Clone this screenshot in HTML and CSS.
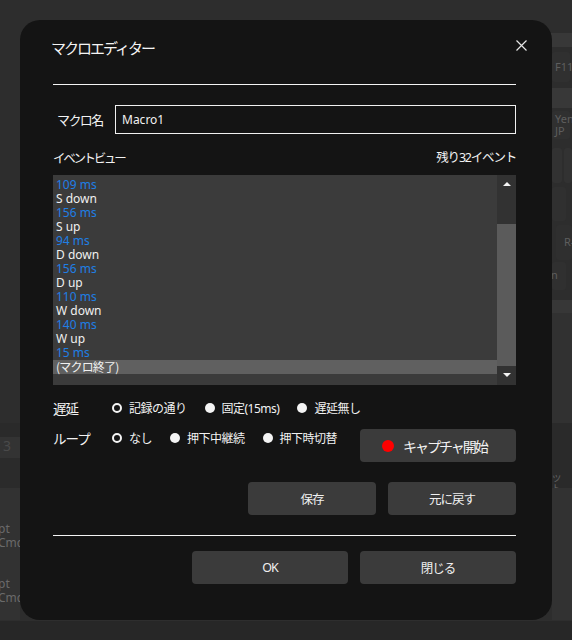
FILE: index.html
```html
<!DOCTYPE html>
<html lang="ja">
<head>
<meta charset="utf-8">
<title>マクロエディター</title>
<link rel="stylesheet" href="styles.css">
</head>
<body>
<div class="backdrop">
  <div class="bd bd-r-band1"></div>
  <div class="bd bd-r-key1"><span>F11</span></div>
  <div class="bd bd-r-band2"></div>
  <div class="bd bd-r-key2"><span>Yen<br>JP</span></div>
  <div class="bd bd-r-key3"></div>
  <div class="bd bd-r-key3b"></div>
  <div class="bd bd-r-key4"></div>
  <div class="bd bd-r-key5"><span>R-</span></div>
  <div class="bd bd-r-key6"><span>n</span></div>
  <div class="bd bd-r-mid"></div>
  <div class="bd bd-r-dark"><span>ット</span></div>
  <div class="bd bd-r-low"></div>
  <div class="bd bd-l-band1"></div>
  <div class="bd bd-l-band2"><span>3</span></div>
  <div class="bd bd-l-band3"></div>
  <div class="bd bd-l-low"><span class="t1">pt<br>Cmd</span><span class="t2">pt<br>Cmd</span></div>
  <div class="bd bd-bottom"></div>
</div>

<div class="dialog">
  <div class="close" aria-label="閉じる">
    <svg width="11" height="11" viewBox="0 0 11 11"><path d="M0.5 0.5 L10.5 10.5 M10.5 0.5 L0.5 10.5" stroke="#e6e6e6" stroke-width="1.2" fill="none"/></svg>
  </div>
  <h1 class="title">マクロエディター</h1>
  <div class="rule"></div>

  <div class="name-row">
    <span class="name-label">マクロ名</span>
    <div class="name-input">Macro1</div>
  </div>

  <div class="view-head">
    <span class="view-title">イベントビュー</span>
    <span class="view-count">残り32イベント</span>
  </div>

  <div class="list">
    <div class="rows">
      <div class="row ms">109 ms</div>
      <div class="row">S down</div>
      <div class="row ms">156 ms</div>
      <div class="row">S up</div>
      <div class="row ms">94 ms</div>
      <div class="row">D down</div>
      <div class="row ms">156 ms</div>
      <div class="row">D up</div>
      <div class="row ms">110 ms</div>
      <div class="row">W down</div>
      <div class="row ms">140 ms</div>
      <div class="row">W up</div>
      <div class="row ms">15 ms</div>
      <div class="row sel">(マクロ終了)</div>
    </div>
    <div class="scrollbar">
      <div class="sb-btn"><span class="arrow-up"></span></div>
      <div class="sb-gap"></div>
      <div class="sb-thumb"></div>
      <div class="sb-btn"><span class="arrow-down"></span></div>
    </div>
  </div>

  <div class="opt-row delay">
    <span class="opt-label">遅延</span>
    <span class="radio"><span class="dot on"></span>記録の通り</span>
    <span class="radio"><span class="dot"></span>固定(15ms)</span>
    <span class="radio"><span class="dot"></span>遅延無し</span>
  </div>

  <div class="loop-row">
    <div class="opt-row loop">
      <span class="opt-label">ループ</span>
      <span class="radio"><span class="dot on"></span>なし</span>
      <span class="radio"><span class="dot"></span>押下中継続</span>
      <span class="radio"><span class="dot"></span>押下時切替</span>
    </div>
    <div class="capture"><span class="rec"></span><span class="capture-text">キャプチャ開始</span></div>
  </div>

  <div class="btn-row first">
    <div class="btn small">保存</div>
    <div class="btn small">元に戻す</div>
  </div>

  <div class="rule rule2"></div>

  <div class="btn-row last">
    <div class="btn large">OK</div>
    <div class="btn large">閉じる</div>
  </div>
</div>
</body>
</html>
```

FILE: styles.css
```css
html, body {
  margin: 0;
}
body {
  width: 572px;
  height: 640px;
  box-sizing: border-box;
  padding: 20px 0 0 20px;
  background: #2d2d2d;
  font-family: "Noto Sans", "Noto Sans CJK JP", sans-serif;
  color: #f2f2f2;
  overflow: hidden;
  position: relative;
}

/* dimmed application behind the modal */
.backdrop {
  position: absolute;
  inset: 0;
  z-index: 0;
}
.bd {
  position: absolute;
  color: #5e5e5e;
  font-size: 11px;
  line-height: 12px;
}
.bd span { position: absolute; left: 4px; }
.bd-r-band1 { left: 540px; top: 33px; width: 32px; height: 14px; background: #383838; }
.bd-r-key1 { left: 552px; top: 52px; width: 18px; height: 30px; background: #303030; border-radius: 3px; }
.bd-r-key1 span { top: 9px; left: 3px; }
.bd-r-band2 { left: 552px; top: 88px; width: 20px; height: 20px; background: #383838; }
.bd-r-key2 { left: 552px; top: 111px; width: 18px; height: 28px; background: #303030; border-radius: 3px; }
.bd-r-key2 span { top: 2px; left: 3px; }
.bd-r-key3 { left: 552px; top: 148px; width: 10px; height: 35px; background: #323232; border-radius: 3px; }
.bd-r-key3b { left: 564px; top: 148px; width: 8px; height: 35px; background: #323232; border-radius: 3px; }
.bd-r-key4 { left: 552px; top: 187px; width: 14px; height: 34px; background: #303030; border-radius: 3px; }
.bd-r-key5 { left: 556px; top: 225px; width: 16px; height: 35px; background: #2f2f2f; border-radius: 3px; }
.bd-r-key5 span { top: 11px; left: 8px; }
.bd-r-key6 { left: 552px; top: 262px; width: 14px; height: 28px; background: #303030; border-radius: 3px; }
.bd-r-key6 span { top: 7px; left: -1px; }
.bd-r-mid { left: 552px; top: 300px; width: 20px; height: 123px; background: #313131; border-top: 13px solid #373737; box-sizing: border-box; }
.bd-r-dark { left: 552px; top: 423px; width: 20px; height: 65px; background: #2a2a2a; }
.bd-r-dark span { top: 48px; left: -1px; }
.bd-r-low { left: 552px; top: 488px; width: 20px; height: 132px; background: #323232; }
.bd-l-band1 { left: 0; top: 423px; width: 20px; height: 14px; background: #2a2a2a; }
.bd-l-band2 { left: 0; top: 437px; width: 20px; height: 21px; background: #333333; font-size: 14px; }
.bd-l-band2 span { top: 3px; left: 3px; color: #4a4a4a; }
.bd-l-band3 { left: 0; top: 458px; width: 20px; height: 30px; background: #2b2b2b; }
.bd-l-low { left: 0; top: 488px; width: 20px; height: 132px; background: #323232; overflow: hidden; }
.bd-l-low span { left: -2px; color: #6a6a6a; font-size: 12px; line-height: 14px; }
.bd-l-low .t1 { top: 34px; }
.bd-l-low .t2 { top: 89px; }
.bd-bottom { left: 0; top: 620px; width: 572px; height: 20px; background: #272727; border-top: 1px solid #2e2e2e; box-sizing: border-box; }

/* dialog */
.dialog {
  position: relative;
  z-index: 1;
  width: 532px;
  height: 600px;
  box-sizing: border-box;
  padding: 18px 36px 0 33px;
  background: #141414;
  border-radius: 20px;
}
.close {
  position: absolute;
  top: 20px;
  right: 25px;
  width: 11px;
  height: 11px;
  line-height: 0;
}
.title {
  margin: 0 0 0 -2px;
  font-family: "Noto Sans CJK JP", sans-serif;
  font-size: 15px;
  line-height: 20px;
  font-weight: 400;
  letter-spacing: -2px;
  color: #f4f4f4;
}
.rule {
  height: 1px;
  background: #f4f4f4;
  margin-top: 26px;
}

.name-row {
  display: flex;
  align-items: center;
  margin-top: 20px;
  height: 29px;
}
.name-label {
  width: 62px;
  box-sizing: border-box;
  padding-left: 4px;
  font-family: "Noto Sans CJK JP", sans-serif;
  font-size: 13px;
  letter-spacing: -1.6px;
}
.name-input {
  flex: 1;
  height: 29px;
  box-sizing: border-box;
  border: 1px solid #f0f0f0;
  padding-left: 6px;
  font-size: 12px;
  display: flex;
  align-items: center;
}

.view-head {
  display: flex;
  justify-content: space-between;
  margin-top: 15px;
  line-height: 18px;
  font-size: 12.5px;
}
.view-title { letter-spacing: -2.3px; font-family: "Noto Sans CJK JP", sans-serif; }
.view-count { letter-spacing: -1.2px; }

.list {
  display: flex;
  margin-top: 8px;
  height: 210px;
  background: #3b3b3b;
}
.rows {
  flex: 1;
  padding-top: 3px;
  font-size: 12px;
  line-height: 14px;
}
.row {
  height: 14px;
  padding-left: 3px;
  color: #f0f0f0;
}
.row.ms { color: #1f7fe6; }
.row.sel { background: #606060; font-family: "Noto Sans CJK JP", sans-serif; letter-spacing: -0.8px; }
.scrollbar {
  width: 19px;
  display: flex;
  flex-direction: column;
  background: #323232;
}
.sb-btn {
  height: 19px;
  display: flex;
  align-items: center;
  justify-content: center;
}
.sb-gap { height: 30px; }
.sb-thumb { height: 142px; background: #5b5b5b; }
.arrow-up, .arrow-down {
  width: 0;
  height: 0;
  border-left: 4px solid transparent;
  border-right: 4px solid transparent;
}
.arrow-up { border-bottom: 4px solid #f4f4f4; margin-top: -2px; }
.arrow-down { border-top: 4px solid #f4f4f4; margin-top: -2px; }

.opt-row {
  display: flex;
  align-items: center;
  height: 20px;
  font-size: 12px;
  font-family: "Noto Sans", "Noto Sans CJK JP", sans-serif;
}
.opt-row.delay { margin-top: 13px; }
.opt-label {
  width: 59px;
  font-family: "Noto Sans CJK JP", sans-serif;
  font-size: 13.5px;
  letter-spacing: -1px;
}
.radio {
  display: flex;
  align-items: center;
  gap: 7px;
  margin-right: 18px;
  letter-spacing: -0.5px;
}
.dot {
  width: 10px;
  height: 10px;
  border-radius: 50%;
  background: #f4f4f4;
  box-sizing: border-box;
}
.dot.on {
  background: transparent;
  border: 2.5px solid #f4f4f4;
}

.loop-row {
  display: flex;
  align-items: flex-start;
  margin-top: 10px;
}
.capture {
  margin-left: auto;
  margin-top: 1px;
  width: 156px;
  height: 33px;
  box-sizing: border-box;
  padding-left: 22px;
  border-radius: 4px;
  background: #3b3b3b;
  display: flex;
  align-items: center;
  gap: 9px;
}
.rec {
  width: 12px;
  height: 12px;
  border-radius: 50%;
  background: #ff0000;
}
.capture-text {
  font-family: "Noto Sans CJK JP", sans-serif;
  font-size: 14px;
  letter-spacing: -2px;
}

.btn-row {
  display: flex;
  justify-content: flex-end;
  gap: 12px;
}
.btn-row.first { margin-top: 20px; }
.btn-row.last { margin-top: 15px; }
.rule2 { margin-top: 20px; }
.btn {
  height: 33px;
  border-radius: 4px;
  background: #3b3b3b;
  display: flex;
  align-items: center;
  justify-content: center;
  font-family: "Noto Sans", "Noto Sans CJK JP", sans-serif;
  font-size: 12.5px;
  letter-spacing: -1px;
  color: #f0f0f0;
}
.btn.small { width: 128px; }
.btn.large { width: 156px; }
```
